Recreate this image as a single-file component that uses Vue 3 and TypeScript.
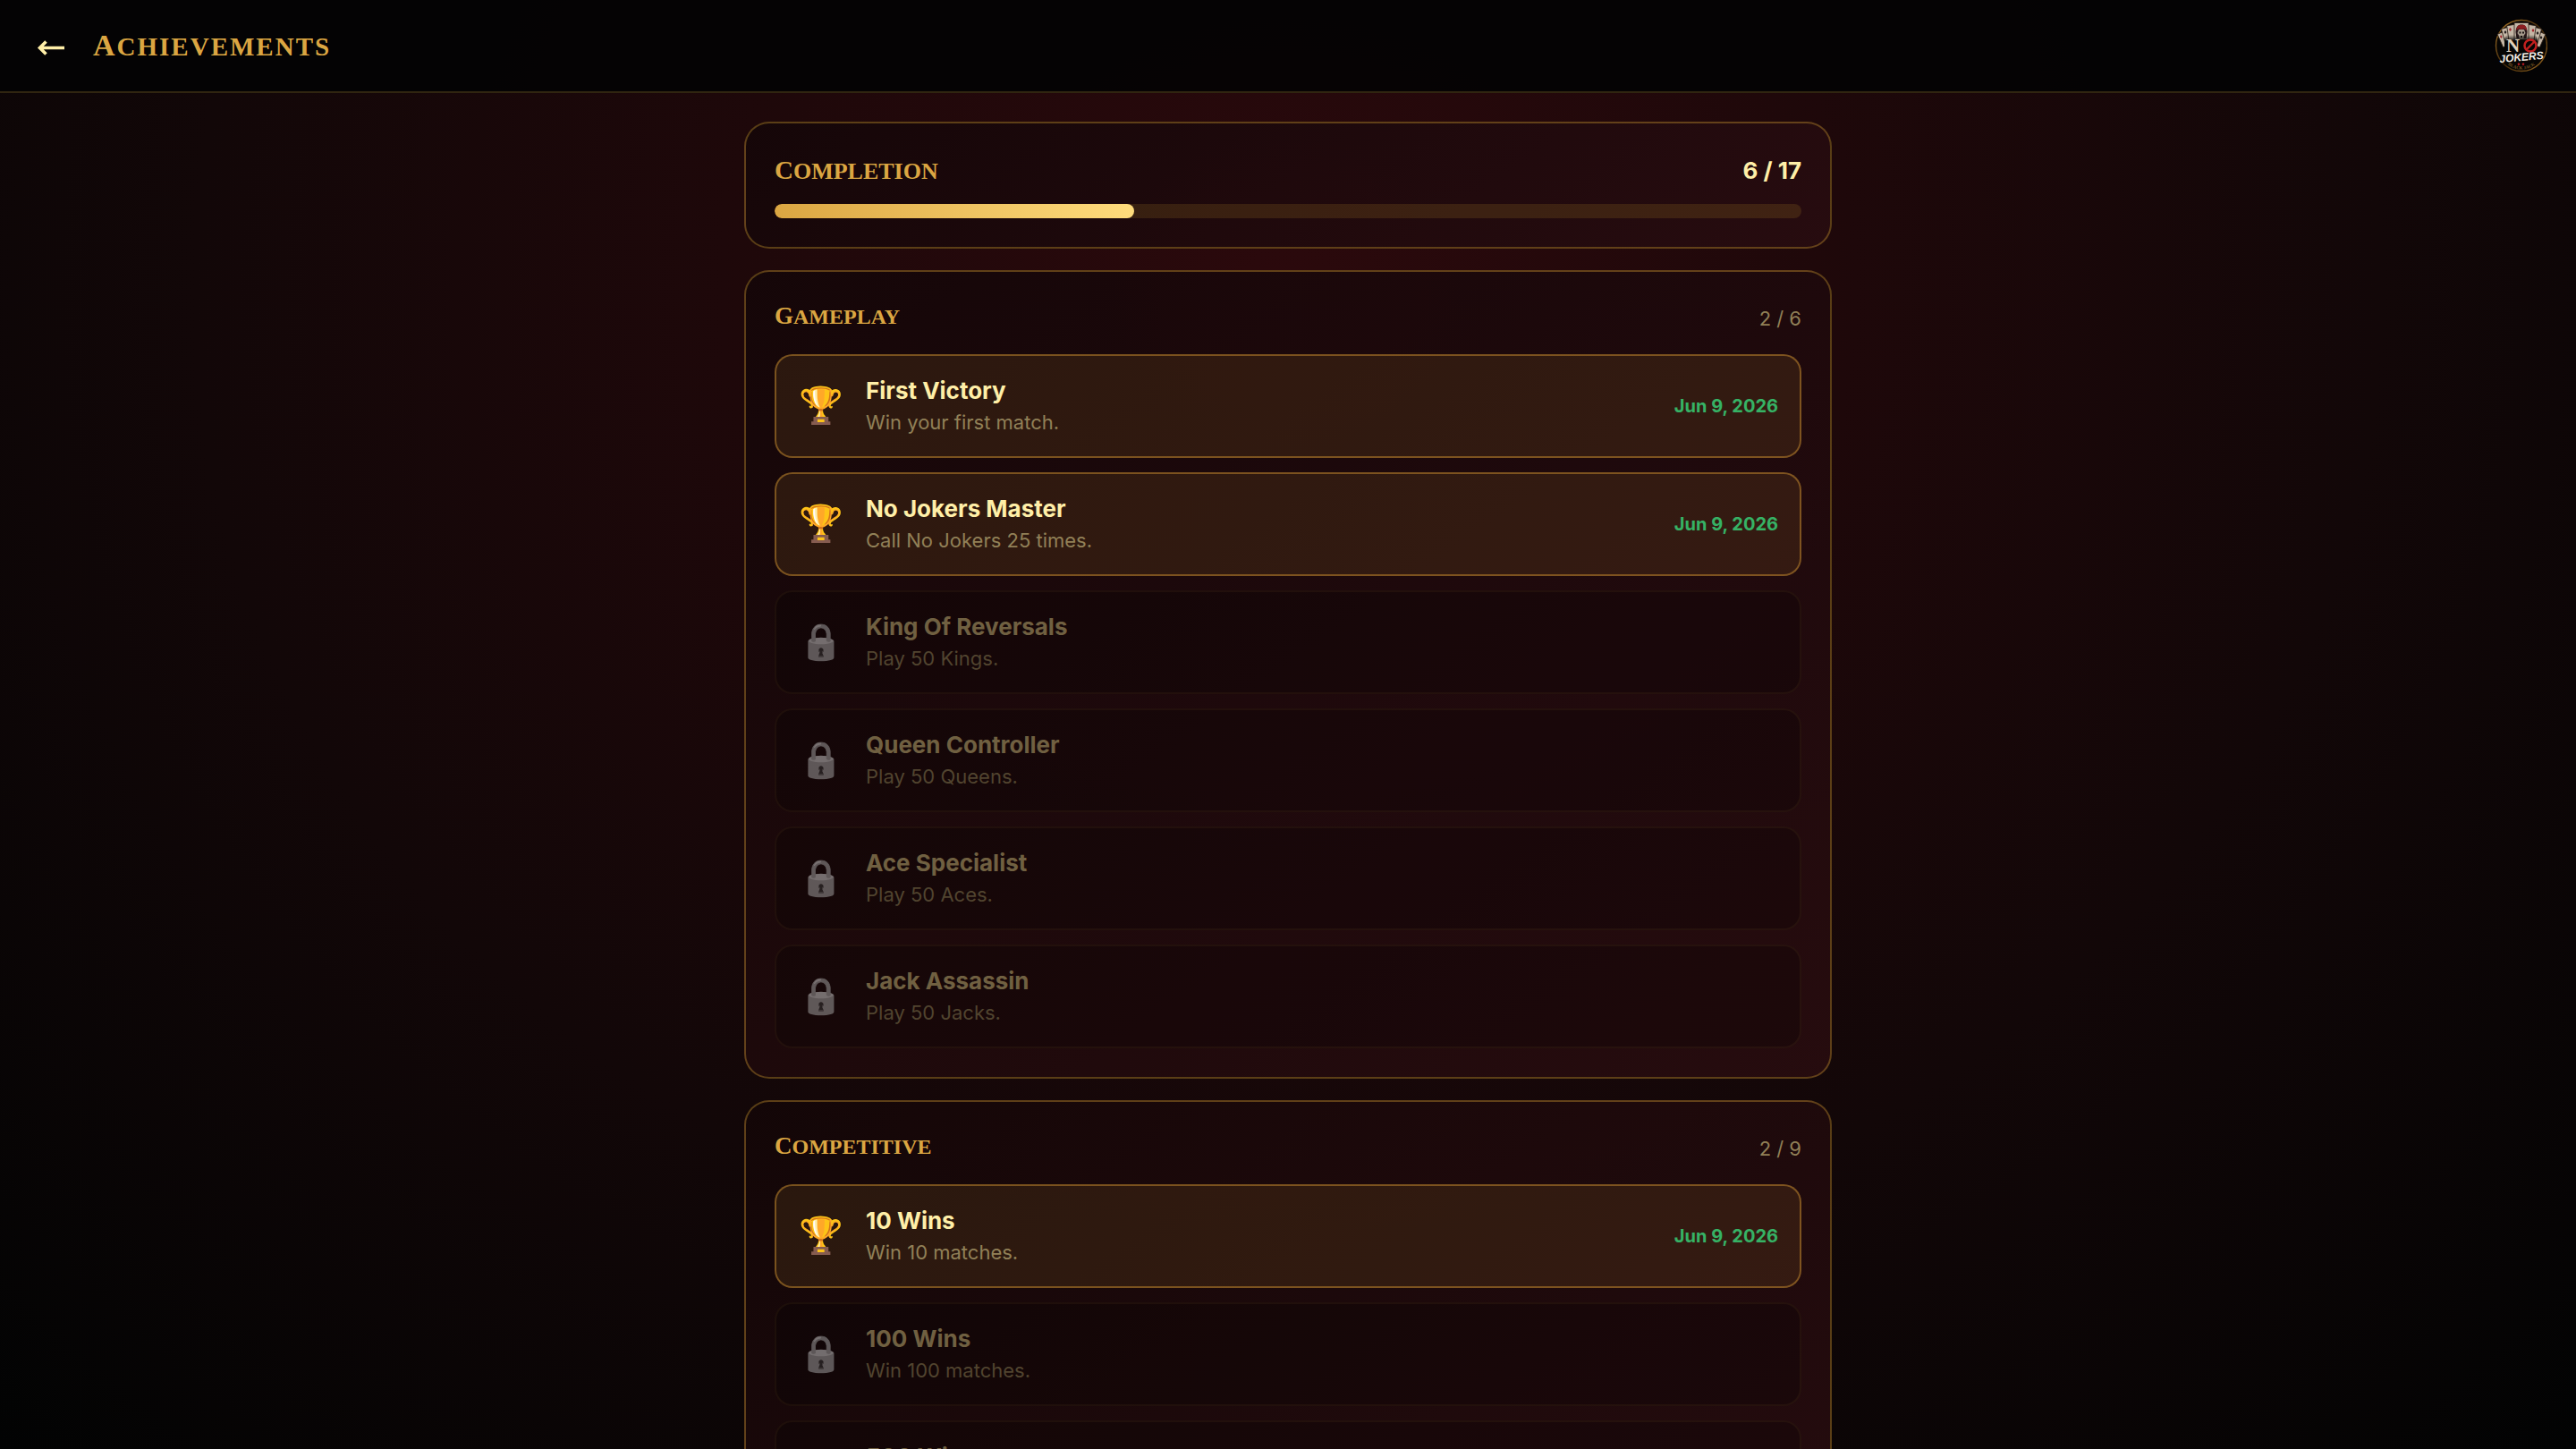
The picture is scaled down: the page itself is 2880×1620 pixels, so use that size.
<script setup lang="ts">
interface Achievement {
  name: string
  detail: string
  unlocked?: string
}

interface Category {
  title: string
  done: number
  total: number
  items: Achievement[]
}

const completed = 6
const available = 17

const categories: Category[] = [
  {
    title: 'Gameplay',
    done: 2,
    total: 6,
    items: [
      { name: 'First Victory', detail: 'Win your first match.', unlocked: 'Jun 9, 2026' },
      { name: 'No Jokers Master', detail: 'Call No Jokers 25 times.', unlocked: 'Jun 9, 2026' },
      { name: 'King Of Reversals', detail: 'Play 50 Kings.' },
      { name: 'Queen Controller', detail: 'Play 50 Queens.' },
      { name: 'Ace Specialist', detail: 'Play 50 Aces.' },
      { name: 'Jack Assassin', detail: 'Play 50 Jacks.' },
    ],
  },
  {
    title: 'Competitive',
    done: 2,
    total: 9,
    items: [
      { name: '10 Wins', detail: 'Win 10 matches.', unlocked: 'Jun 9, 2026' },
      { name: '100 Wins', detail: 'Win 100 matches.' },
      { name: '500 Wins', detail: 'Win 500 matches.' },
    ],
  },
]
</script>

<template>
  <div class="page">
    <header class="topbar">
      <button class="back" type="button" aria-label="Back">
        <svg viewBox="0 0 32 24" width="32" height="24" fill="none" stroke="currentColor" stroke-width="3.6">
          <path d="M31 14.500H3.500M10.500 7.500L3.500 14.500L10.500 21.500" />
        </svg>
      </button>
      <h1 class="display">Achievements</h1>
      <svg class="logo" viewBox="0 0 60 60" width="60" height="60" role="img" aria-label="No Jokers Black Jack">
        <defs>
          <linearGradient id="ring" x1="0" y1="0" x2="1" y2="1">
            <stop offset="0" stop-color="#b9822e" />
            <stop offset=".5" stop-color="#3d2508" />
            <stop offset="1" stop-color="#a06d22" />
          </linearGradient>
          <linearGradient id="shade" x1="0" y1="0" x2="0" y2="1">
            <stop offset="0" stop-color="#060504" stop-opacity="0" />
            <stop offset=".35" stop-color="#060504" />
            <stop offset="1" stop-color="#060504" />
          </linearGradient>
          <path id="arc" d="M9 46Q31 67 53 46" />
        </defs>
        <circle cx="31" cy="30" r="28.5" fill="#060504" stroke="url(#ring)" stroke-width="1.4" />
        <g fill="#c4b6a5" stroke="#2a1d15" stroke-width=".8">
          <rect x="7" y="15" width="9" height="16" transform="rotate(-24 11 23)" />
          <rect x="46" y="15" width="9" height="16" transform="rotate(24 51 23)" />
          <rect x="11" y="10" width="9" height="18" transform="rotate(-16 15 20)" />
          <rect x="42" y="10" width="9" height="18" transform="rotate(16 47 20)" />
          <rect x="16" y="7" width="9" height="18" transform="rotate(-8 20 17)" />
          <rect x="37" y="7" width="9" height="18" transform="rotate(8 42 17)" />
          <rect x="23" y="4.5" width="16" height="19" />
        </g>
        <path d="M8 18l1.500 2-1 2-1.500-2zM18.500 10l1.500 2-1.500 2-1.500-2zM44 11l1.500 2-1.500 2-1.500-2z" fill="#a3242b" />
        <path d="M13 13l1.500 2-1.500 2-1.500-2zM49 14l1.500 2-1.500 2-1.500-2zM53 19l1.500 2-1.500 2-1.500-2z" fill="#211b1b" />
        <path d="M24.500 15c0-6 3-8.500 6.500-8.500s6.500 2.500 6.500 8.500l-1 7h-11z" fill="#29191a" />
        <path d="M25 13c1-5 3-7 6-6 4-1 6 2 6 6l-3-2-3 1-3-1z" fill="#8c1d20" />
        <path d="M28 12h6l1.500 4-2 3v3h-5v-3l-2-3z" fill="#a99d8e" />
        <path d="M28.500 14.500h2v2h-2zM32 14.500h2v2h-2zM30 19h2v2h-2z" fill="#160f0e" />
        <rect x="12" y="18" width="37" height="20" rx="5" fill="url(#shade)" />
        <text x="14" y="36.500" class="logo-n">N</text>
        <circle cx="41" cy="30" r="6.500" fill="none" stroke="#c1201f" stroke-width="2.500" />
        <path d="M45.500 25.500L36.500 34.500" stroke="#c1201f" stroke-width="2.400" />
        <text x="31" y="47" text-anchor="middle" transform="rotate(-5 31 43)" class="logo-jokers">JOKERS</text>
        <path d="M28 49l1.500 1.800L28 52.500l-1.500-1.700zM33 49l1.500 1.800L33 52.500l-1.500-1.700z" fill="#b81c20" />
        <text class="logo-sub"><textPath href="#arc" startOffset="50%" text-anchor="middle">BLACK JACK</textPath></text>
      </svg>
    </header>

    <main class="content">
      <section class="panel summary">
        <div class="panel-head">
          <h2 id="completion" class="display">Completion</h2>
          <strong class="score">{{ completed }} / {{ available }}</strong>
        </div>
        <div
          class="track"
          role="progressbar"
          aria-labelledby="completion"
          aria-valuemin="0"
          :aria-valuemax="available"
          :aria-valuenow="completed"
        >
          <div class="fill" :style="{ width: `${Math.round((completed / available) * 100)}%` }"></div>
        </div>
      </section>

      <section v-for="category in categories" :key="category.title" class="panel">
        <div class="panel-head">
          <h3 class="display">{{ category.title }}</h3>
          <span class="count">{{ category.done }} / {{ category.total }}</span>
        </div>
        <ul class="list">
          <li
            v-for="item in category.items"
            :key="item.name"
            class="row"
            :class="item.unlocked ? 'unlocked' : 'locked'"
          >
            <span class="icon" aria-hidden="true">{{ item.unlocked ? '🏆' : '🔒' }}</span>
            <div class="text">
              <span class="name">{{ item.name }}</span>
              <span class="detail">{{ item.detail }}</span>
            </div>
            <time v-if="item.unlocked" class="date" datetime="2026-06-09">{{ item.unlocked }}</time>
          </li>
        </ul>
      </section>
    </main>
  </div>
</template>

<style>
body {
  margin: 0;
  background: #030304;
}
</style>

<style scoped>
.page {
  display: flex;
  flex-direction: column;
  height: 100vh;
  overflow: hidden;
  color: #ffefa8;
  font-family: Inter, sans-serif;
  background: radial-gradient(ellipse at 50% 20%, #2b090c 0%, #120708 60%, #020303 100%);
}

.topbar {
  display: flex;
  align-items: center;
  flex: none;
  gap: 22px;
  height: 102px;
  padding: 0 32px;
  border-bottom: 2px solid #302510;
  background: rgba(3, 3, 4, 0.92);
}

.back {
  display: flex;
  align-items: center;
  justify-content: center;
  width: 50px;
  height: 48px;
  padding: 0;
  border: 0;
  background: none;
  color: inherit;
  cursor: pointer;
}

.logo {
  margin-left: auto;
}

.logo-n {
  fill: #e2d1bb;
  font: 700 21px "Liberation Serif", serif;
}

.logo-jokers {
  fill: #f1ece5;
  font: italic 700 12px "Liberation Sans", sans-serif;
}

.logo-sub {
  fill: #7a5722;
  font: 700 5px "Liberation Serif", serif;
}

.display {
  margin: 0;
  color: #dba642;
  font-family: "Liberation Serif", serif;
  font-weight: 700;
  text-transform: uppercase;
}

h1.display {
  font-size: 29px;
  letter-spacing: 2px;
}

h1.display::first-letter {
  font-size: 34px;
}

h2.display {
  font-size: 26px;
}

h2.display::first-letter {
  font-size: 29px;
}

h3.display {
  font-size: 24px;
  line-height: 34px;
}

h3.display::first-letter {
  font-size: 27px;
}

.content {
  display: flex;
  flex: 1;
  flex-direction: column;
  gap: 24px;
  box-sizing: border-box;
  width: 100%;
  max-width: 1280px;
  min-height: 0;
  margin: 0 auto;
  padding: 32px;
  overflow-y: auto;
  scrollbar-width: none;
}

.panel {
  flex: none;
  padding: 32px;
  border: 2px solid rgba(218, 165, 50, 0.35);
  border-radius: 28px;
  background: linear-gradient(145deg, rgba(20, 7, 8, 0.9), rgba(40, 13, 16, 0.9));
}

.panel-head {
  display: flex;
  align-items: flex-start;
  justify-content: space-between;
  height: 40px;
  margin-bottom: 20px;
}

.summary .panel-head {
  align-items: center;
  margin-bottom: 18px;
}

.score {
  font-size: 26px;
  font-weight: 700;
}

.count {
  color: #918057;
  font-size: 22px;
  line-height: 40px;
}

.track {
  height: 16px;
  border-radius: 8px;
  background: rgba(218, 165, 50, 0.15);
  overflow: hidden;
}

.fill {
  height: 100%;
  border-radius: 8px;
  background: linear-gradient(90deg, #dba642, #ffdc7c);
}

.list {
  display: flex;
  flex-direction: column;
  gap: 16px;
  margin: 0;
  padding: 0;
  list-style: none;
}

.row {
  display: flex;
  align-items: center;
  gap: 24px;
  padding: 24px;
  border: 2px solid rgba(218, 155, 50, 0.45);
  border-radius: 20px;
  background: rgba(218, 165, 66, 0.11);
}

.locked {
  border-color: rgba(218, 165, 66, 0.06);
  background: rgba(0, 0, 0, 0.22);
}

.icon {
  flex: none;
  width: 52px;
  font-family: "Noto Color Emoji", sans-serif;
  font-size: 40px;
  line-height: 52px;
  text-align: center;
}

.text {
  display: flex;
  flex: 1;
  flex-direction: column;
  gap: 6px;
}

.name {
  font-size: 26px;
  font-weight: 700;
  line-height: 30px;
}

.detail {
  color: #918057;
  font-size: 22px;
  line-height: 28px;
}

.locked .name {
  color: #706041;
}

.locked .detail {
  color: #51442f;
}

.locked .icon {
  filter: grayscale(1);
  opacity: 0.5;
}

.date {
  color: #36b265;
  font-size: 20px;
  font-weight: 700;
}
</style>
